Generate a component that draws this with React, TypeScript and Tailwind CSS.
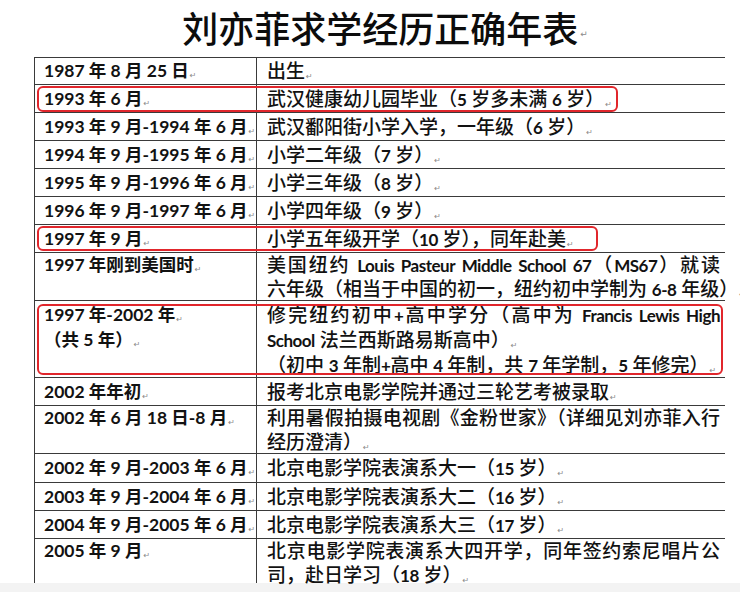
import React from 'react';

type Row = {
  h: string;
  left: string[];
  right: string[];
  box?: string;
  multi?: string;
  lineH?: string;
  last?: boolean;
};

const rows: Row[] = [
  { h: 'h-[27px]', left: ['1987 年 8 月 25 日↵'], right: ['出生↵'] },
  {
    h: 'h-[28px]',
    left: ['1993 年 6 月↵'],
    right: ['武汉健康幼儿园毕业（5 岁多未满 6 岁）↵'],
    box: 'top-[1px] h-[26px] w-[581px]',
  },
  { h: 'h-[28px]', left: ['1993 年 9 月-1994 年 6 月↵'], right: ['武汉鄱阳街小学入学，一年级（6 岁）↵'] },
  { h: 'h-[28px]', left: ['1994 年 9 月-1995 年 6 月↵'], right: ['小学二年级（7 岁）↵'] },
  { h: 'h-[28px]', left: ['1995 年 9 月-1996 年 6 月↵'], right: ['小学三年级（8 岁）↵'] },
  { h: 'h-[28px]', left: ['1996 年 9 月-1997 年 6 月↵'], right: ['小学四年级（9 岁）↵'] },
  {
    h: 'h-[28px]',
    left: ['1997 年 9 月↵'],
    right: ['小学五年级开学（10 岁），同年赴美↵'],
    box: 'top-[1px] h-[25px] w-[561px]',
  },
  {
    h: 'h-[48px]',
    multi: 'leading-[24px] pt-0',
    lineH: 'h-[24px]',
    left: ['1997 年刚到美国时↵'],
    right: ['美国纽约 Louis Pasteur Middle School 67（MS67）就读', '六年级（相当于中国的初一，纽约初中学制为 6-8 年级）↵'],
  },
  {
    h: 'h-[77px]',
    multi: 'leading-[25px] pt-[1px]',
    lineH: 'h-[25px]',
    left: ['1997 年-2002 年↵', '（共 5 年）↵'],
    right: [
      '修完纽约初中+高中学分（高中为 Francis Lewis High',
      'School 法兰西斯路易斯高中）↵',
      '（初中 3 年制+高中 4 年制，共 7 年学制，5 年修完）↵',
    ],
    box: 'top-[3px] h-[71px] w-[686px]',
  },
  { h: 'h-[28px]', left: ['2002 年年初↵'], right: ['报考北京电影学院并通过三轮艺考被录取↵'] },
  {
    h: 'h-[48px]',
    multi: 'leading-[24px] pt-0',
    lineH: 'h-[24px]',
    left: ['2002 年 6 月 18 日-8 月↵'],
    right: ['利用暑假拍摄电视剧《金粉世家》（详细见刘亦菲入行', '经历澄清）↵'],
  },
  { h: 'h-[29px]', left: ['2002 年 9 月-2003 年 6 月↵'], right: ['北京电影学院表演系大一（15 岁）↵'] },
  { h: 'h-[28px]', left: ['2003 年 9 月-2004 年 6 月↵'], right: ['北京电影学院表演系大二（16 岁）↵'] },
  { h: 'h-[28px]', left: ['2004 年 9 月-2005 年 6 月↵'], right: ['北京电影学院表演系大三（17 岁）↵'] },
  {
    h: 'h-[44px]',
    multi: 'leading-[24px] pt-0',
    lineH: 'h-[24px]',
    last: true,
    left: ['2005 年 9 月↵'],
    right: ['北京电影学院表演系大四开学，同年签约索尼唱片公', '司，赴日学习（18 岁）↵'],
  },
];

function Mark() {
  return (
    <span className="ml-[1px] align-[-1px] font-['DejaVu_Sans'] text-[8px] leading-none font-normal text-[#8a8a8a]">
      ↵
    </span>
  );
}

function Line({ text, justify, lineH }: { text: string; justify: boolean; lineH: string }) {
  const hasMark = text.endsWith('↵');
  const body = hasMark ? text.slice(0, -1) : text;
  const parts = body.split(/([A-Za-z0-9+\-]+)/);
  return (
    <div
      className={`${lineH} whitespace-nowrap ${justify ? 'text-justify [text-align-last:justify]' : ''}`}
    >
      {parts.map((p, i) =>
        i % 2 === 1 ? (
          <span key={i} className="font-bold text-[17px] leading-none tracking-[-0.5px]">
            {p}
          </span>
        ) : (
          <span key={i} className="leading-none font-medium">
            {p}
          </span>
        )
      )}
      {hasMark && <Mark />}
    </div>
  );
}

export default function App() {
  return (
    <div className="w-[740px] h-[592px] overflow-hidden bg-[#f3f3f3] font-['Lato','Noto_Sans_CJK_SC',sans-serif] text-[#121212]">
      <div className="h-[583px] w-[740px] bg-white flex flex-col">
        <div className="h-[57px] shrink-0 flex items-center justify-center pl-[30px] pb-[3px]">
          <span className="font-['Noto_Sans_CJK_SC',sans-serif] text-[36px] font-medium leading-none text-[#0c0c0c]">
            刘亦菲求学经历正确年表
          </span>
          <span className="ml-[2px] mt-[16px] font-['DejaVu_Sans'] text-[9px] text-[#8a8a8a]">↵</span>
        </div>
        <div className="ml-[34px] w-[691px] border-l border-t border-[#3a3a3a]">
          {rows.map((r, idx) => {
            const lineH = r.lineH ?? 'h-[24px]';
            return (
              <div
                key={idx}
                className={`relative flex ${r.h} ${r.last ? '' : 'border-b border-[#3a3a3a]'}`}
              >
                <div
                  className={`w-[222px] shrink-0 border-r border-[#3a3a3a] pl-[9px] overflow-hidden font-bold text-[17.5px] ${
                    r.multi ? r.multi : 'flex flex-col justify-center leading-[24px]'
                  }`}
                >
                  {r.left.map((t, i) => (
                    <div key={i} className={`${lineH} whitespace-nowrap`}>
                      {t.endsWith('↵') ? t.slice(0, -1) : t}
                      {t.endsWith('↵') && <Mark />}
                    </div>
                  ))}
                </div>
                <div
                  className={`w-[468px] shrink-0 pl-[10px] pr-[5px] text-[19px] ${
                    r.multi ? r.multi : 'flex flex-col justify-center leading-[24px]'
                  }`}
                >
                  {r.right.map((t, i) => (
                    <Line key={i} text={t} justify={!t.endsWith('↵')} lineH={lineH} />
                  ))}
                </div>
                {r.box && (
                  <div
                    className={`pointer-events-none absolute left-[2px] rounded-[6px] border-[2.5px] border-[#e1262c] ${r.box}`}
                  />
                )}
              </div>
            );
          })}
        </div>
      </div>
    </div>
  );
}
